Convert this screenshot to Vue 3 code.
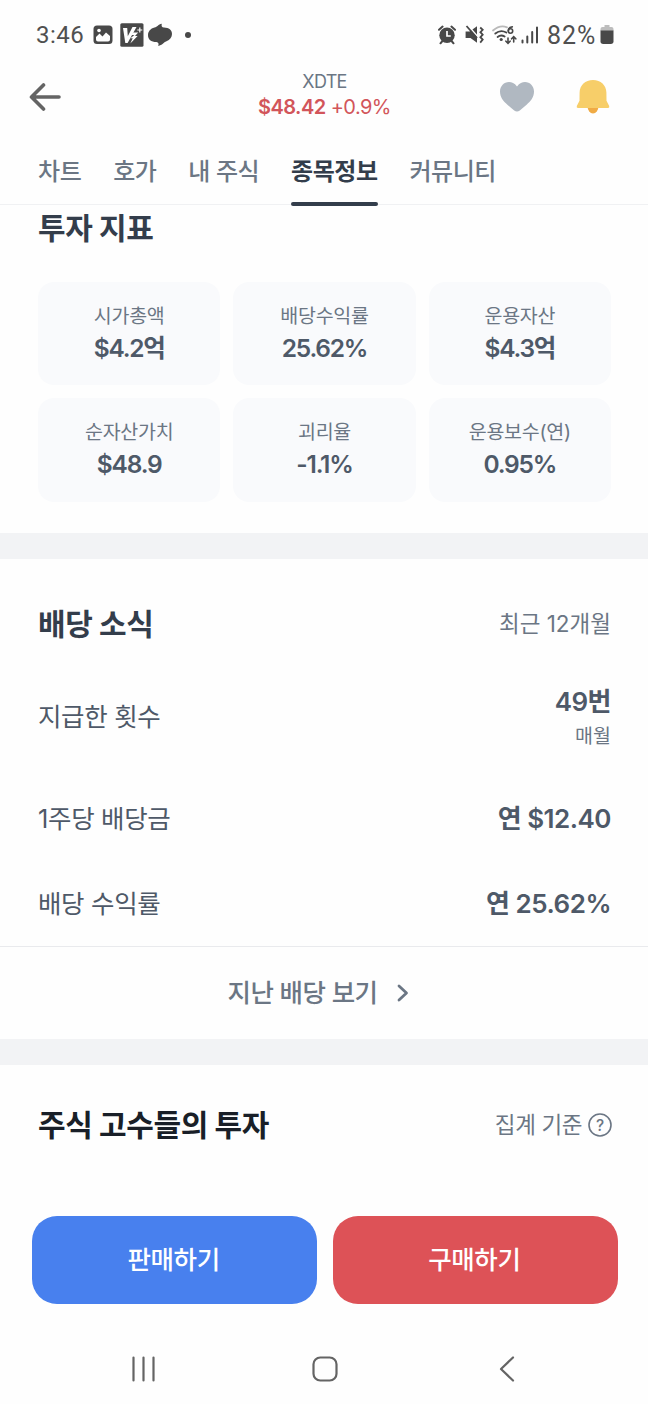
<template>
  <div class="screen">
    <div class="status">
      <div class="statusLeft">
        <span class="clock">3:46</span>
        <svg class="icoPhoto" width="20" height="20" viewBox="0 0 20 20">
          <rect x="0.5" y="0.5" width="19" height="18.5" rx="3.5" fill="#484848" />
          <path d="M3 14.500V12l3.500-3.500 3 3 3.500-4L17 11v3.500q0 2-2 2H5q-2 0-2-2z" fill="#fff" />
          <circle cx="6" cy="5.500" r="1.800" fill="#fff" />
        </svg>
        <svg class="icoVaccine" width="24" height="24" viewBox="0 0 24 24">
          <rect x="0.3" y="0.3" width="23.2" height="23.4" rx="1.5" fill="#484848" />
          <path d="M3 5h4.200l.6 8.200L12.500 4h4L7.600 20H5.300z" fill="#fff" />
          <path d="M12.700 9.500h5.500l-3.200 3.400h2.600L10.300 20.500l2.400-5.200h-2.300l4-3.200h-2.600z" fill="#fff" />
          <path d="M19.800 4.500v5M17.300 7h5" stroke="#fff" stroke-width="1.200" />
        </svg>
        <svg class="icoSwirl" width="24" height="24" viewBox="0 0 24 24">
          <path d="M13.800 .8C10 1.500 9.500 4 6.500 4.600C2.500 5.600 0 8.600 0 12.200C0 16.400 3 18.800 8.500 19.100C10.500 19.300 11 21 10.200 23C14.500 22.300 15.500 19.300 18.500 18.300C22 17 24 14.200 24 11C24 7 21 4.600 16 4.500C13.800 4.400 13.200 3 13.800 .8Z" fill="#484848" />
        </svg>
        <span class="dot"></span>
      </div>
      <div class="statusRight">
        <svg width="18" height="20" viewBox="0 0 18 20">
          <path d="M1 4.800 4.600 1.600M17 4.800 13.400 1.600M4 16.500 2.500 18.300M14 16.500l1.500 1.800" stroke="#484848" stroke-width="2" stroke-linecap="round" />
          <circle cx="9" cy="10.300" r="7.700" fill="#484848" />
          <path d="M9 6v5h3.800" stroke="#fff" stroke-width="1.700" fill="none" />
        </svg>
        <svg class="icoMute" width="20" height="20" viewBox="0 0 20 20">
          <path d="M.6 6.500h4L12 1.300v16.500L5.500 13H.6z" fill="#484848" />
          <path d="M2.800 .2 13.500 12.500" stroke="#fff" stroke-width="1.500" />
          <path d="M1.500 1 12 13" stroke="#484848" stroke-width="1.800" />
          <path d="M15.200 2.500l2.500 2.300-2.300 2.400 2.300 2.500-2.300 2.500 2.300 2.400-2.500 3" stroke="#484848" stroke-width="1.800" fill="none" />
        </svg>
        <svg class="icoWifi" width="25" height="20" viewBox="0 0 25 20">
          <g fill="none" stroke-linecap="round">
            <path d="M1 5.500Q8-.5 15 2.300" stroke="#b9b9b9" stroke-width="1.800" />
            <path d="M3.300 8.600Q8.500 4.300 14.300 7.500M5.600 11.900Q9 9.200 12.600 11.500" stroke="#484848" stroke-width="1.900" />
            <path d="M16 13v5M13.900 16.200l2.100 2.200 2.100-2.200M21.700 17v-5M19.600 13.800l2.100-2.200 2.100 2.200" stroke="#484848" stroke-width="1.600" />
            <path d="M20.300 1.800Q16.300 2.300 16.300 5.800" stroke="#484848" stroke-width="1.700" />
            <circle cx="18.500" cy="6" r="2.200" stroke="#484848" stroke-width="1.600" />
          </g>
          <circle cx="9.200" cy="14.500" r="1.600" fill="#484848" />
        </svg>
        <svg class="icoSignal" width="18" height="18" viewBox="0 0 18 18">
          <path d="M1.500 14.500v2M6.300 10.500v6M11.200 6v10.500M16 1.500v15" stroke="#484848" stroke-width="2" stroke-linecap="round" />
        </svg>
        <span class="percent">82%</span>
        <svg class="icoBattery" width="14" height="20" viewBox="0 0 14 20">
          <path d="M4.500 0h5v2h2Q13.500 2 13.500 4v2H.5V4q0-2 2-2h2z" fill="#bdbdbd" />
          <path d="M.5 5.500h13v10.800q0 2.700-2.700 2.700H3.200Q.5 19 .5 16.300z" fill="#484848" />
        </svg>
      </div>
    </div>

    <header class="head">
      <button class="iconBtn back" type="button" aria-label="뒤로">
        <svg width="32" height="30" viewBox="0 0 32 30">
          <path d="M14.500 3 2.500 15l12 12M3 15h27" fill="none" stroke="#646464" stroke-width="3.600" stroke-linecap="round" stroke-linejoin="round" />
        </svg>
      </button>
      <div class="quote">
        <div class="ticker">XDTE</div>
        <div class="price"><b>$48.42</b> +0.9%</div>
      </div>
      <div class="headActions">
        <button class="iconBtn" type="button" aria-label="관심">
          <svg width="36" height="32" viewBox="0 0 36 32">
            <path d="M18 5.500C20.500 2 23.300 1 26 1c5 0 9 4.200 9 9.500 0 5.700-3.300 9.600-7.400 13.200l-6.800 5.700q-2.800 2-5.600 0l-6.800-5.700C4.300 20.100 1 16.200 1 10.500 1 5.200 5 1 10 1c2.700 0 5.500 1 8 4.500z" fill="#b0b8c1" />
          </svg>
        </button>
        <button class="iconBtn" type="button" aria-label="알림">
          <svg width="34" height="36" viewBox="0 0 34 36">
            <path d="M11.500 27h11a5.500 7.500 0 0 1-11 0z" fill="#f0ab45" />
            <path d="M17 1C9.200 1 3.700 6.300 3.600 13.500l-.1 8.300-2.700 5.100Q.2 29 2 29h30q1.800 0 1.200-2.100l-2.700-5.100-.1-8.300C30.300 6.300 24.800 1 17 1z" fill="#f7ce69" />
          </svg>
        </button>
      </div>
    </header>

    <nav class="tabs">
      <button
        v-for="tab in tabs"
        :key="tab"
        class="tab"
        :class="{ active: tab === activeTab }"
        type="button"
        @click="activeTab = tab"
      >{{ tab }}</button>
    </nav>

    <section class="metrics">
      <h2 class="title">투자 지표</h2>
      <div class="grid">
        <div v-for="m in metrics" :key="m.label" class="card">
          <div class="cardLabel">{{ m.label }}</div>
          <div class="cardValue">{{ m.value }}</div>
        </div>
      </div>
    </section>

    <div class="band"></div>

    <section class="dividend">
      <div class="sectionHead">
        <h2 class="title">배당 소식</h2>
        <span class="hint">최근 12개월</span>
      </div>
      <div v-for="r in rows" :key="r.label" class="row" :class="{ tall: r.sub }">
        <span class="rowLabel">{{ r.label }}</span>
        <div class="rowRight">
          <div class="rowValue">{{ r.value }}</div>
          <div v-if="r.sub" class="rowSub">{{ r.sub }}</div>
        </div>
      </div>
    </section>

    <button class="more" type="button">
      <span>지난 배당 보기</span>
      <svg width="12" height="18" viewBox="0 0 12 18">
        <path d="M2 2l7.500 7L2 16" fill="none" stroke="#6b7684" stroke-width="2.800" stroke-linecap="round" stroke-linejoin="round" />
      </svg>
    </button>

    <div class="band"></div>

    <section class="masters">
      <h2 class="title dark">주식 고수들의 투자</h2>
      <div class="basis">
        <span>집계 기준</span>
        <svg width="24" height="24" viewBox="0 0 24 24">
          <circle cx="12" cy="12" r="11" fill="none" stroke="#6b7684" stroke-width="1.600" />
          <text class="question" x="12" y="17.500" text-anchor="middle">?</text>
        </svg>
      </div>
    </section>

    <div class="trade">
      <button class="tradeBtn sell" type="button">판매하기</button>
      <button class="tradeBtn buy" type="button">구매하기</button>
    </div>

    <div class="sysnav">
      <svg width="26" height="26" viewBox="0 0 26 26">
        <path d="M2.500 1.500v23M12.500 1.500v23M22.500 1.500v23" stroke="#646464" stroke-width="2.200" stroke-linecap="round" />
      </svg>
      <svg width="26" height="26" viewBox="0 0 26 26">
        <rect x="1.5" y="1.5" width="23" height="23" rx="6.8" fill="none" stroke="#646464" stroke-width="2.2" />
      </svg>
      <svg width="26" height="26" viewBox="0 0 26 26">
        <path d="M20 1.500 8 13l12 11.500" fill="none" stroke="#646464" stroke-width="2.200" stroke-linecap="round" stroke-linejoin="round" />
      </svg>
    </div>
  </div>
</template>

<script setup>
import { ref } from "vue";

const tabs = ["차트", "호가", "내 주식", "종목정보", "커뮤니티"];
const activeTab = ref("종목정보");

const metrics = [
  { label: "시가총액", value: "$4.2억" },
  { label: "배당수익률", value: "25.62%" },
  { label: "운용자산", value: "$4.3억" },
  { label: "순자산가치", value: "$48.9" },
  { label: "괴리율", value: "-1.1%" },
  { label: "운용보수(연)", value: "0.95%" },
];

const rows = [
  { label: "지급한 횟수", value: "49번", sub: "매월" },
  { label: "1주당 배당금", value: "연 $12.40" },
  { label: "배당 수익률", value: "연 25.62%" },
];
</script>

<style>
body { margin: 0; background: #fefefe; }
</style>

<style scoped>
.screen {
  width: 648px;
  height: 1404px;
  display: flex;
  flex-direction: column;
  overflow: hidden;
  background: #fefefe;
  color: #4e5968;
  font-family: Inter, "Noto Sans CJK KR", sans-serif;
}

.screen > * { flex-shrink: 0; box-sizing: border-box; }

button {
  border: 0;
  padding: 0;
  background: none;
  font-family: inherit;
  color: inherit;
  cursor: pointer;
}

svg { display: block; flex-shrink: 0; }

.status {
  height: 66px;
  padding: 4px 34px 0 36px;
  display: flex;
  align-items: center;
  justify-content: space-between;
  color: #505050;
  font-family: Roboto, sans-serif;
  font-size: 24px;
}

.statusLeft, .statusRight { display: flex; align-items: center; }
.clock { width: 57px; letter-spacing: .5px; }
.icoVaccine { margin-left: 6.5px; }
.icoSwirl { margin-left: 4.5px; }
.dot { width: 6px; height: 6px; margin-left: 12.5px; border-radius: 50%; background: #484848; }
.icoMute { margin-left: 9px; }
.icoWifi { margin-left: 7px; }
.icoSignal { margin-left: 4px; }
.percent { width: 53px; margin-left: 8px; font-size: 25px; letter-spacing: .9px; }

.head {
  height: 70px;
  padding: 0 38px 8px 29px;
  display: grid;
  grid-template-columns: 1fr auto 1fr;
  align-items: center;
}

.back { justify-self: start; }
.quote { padding: 0 0 3px 10px; text-align: center; color: #6b7684; }
.ticker { font-size: 18px; line-height: 24px; letter-spacing: -.7px; }
.price { font-size: 20px; line-height: 27px; letter-spacing: -.55px; color: #d2555a; }
.price b { font-weight: 600; }
.headActions { display: flex; align-items: center; justify-content: flex-end; gap: 41px; }

.tabs {
  height: 69px;
  padding: 0 38px;
  display: flex;
  gap: 31.9px;
  border-bottom: 1px solid #f0f1f3;
}

.tab {
  position: relative;
  height: 70px;
  padding-top: 1px;
  font-size: 24px;
  line-height: 36px;
  font-weight: 500;
  letter-spacing: -.45px;
  color: #6b7684;
}

.tab.active { font-weight: 700; color: #333d4b; }

.tab.active::after {
  content: "";
  position: absolute;
  left: 0;
  right: 0;
  bottom: 0;
  height: 4px;
  border-radius: 2px;
  background: #333d4b;
}

.title {
  margin: 0;
  font-size: 30px;
  line-height: 40px;
  font-weight: 700;
  letter-spacing: -.4px;
  color: #333d4b;
}

.title.dark { color: #191f28; }

.metrics { height: 328px; padding: 3px 37px 0 38px; }

.grid {
  margin-top: 33.5px;
  display: grid;
  grid-template-columns: repeat(3, 1fr);
  gap: 13px;
}

.card {
  height: 103.5px;
  padding-top: 19px;
  box-sizing: border-box;
  border-radius: 16px;
  background: #f9fafc;
  text-align: center;
}

.cardLabel { font-size: 19.5px; line-height: 30px; color: #6b7684; letter-spacing: -.25px; }
.cardValue { font-size: 24.5px; line-height: 34px; font-weight: 600; letter-spacing: -1.2px; }

.band { height: 26px; background: #f2f3f5; }

.dividend { height: 387px; padding: 45px 37px 0 38px; }

.sectionHead {
  display: flex;
  align-items: center;
  justify-content: space-between;
  margin-bottom: 34px;
}

.hint { font-size: 22.5px; line-height: 40px; color: #6b7684; }

.row {
  height: 43px;
  margin-bottom: 42px;
  display: flex;
  align-items: center;
  justify-content: space-between;
}

.row.tall { height: 78px; margin-bottom: 41px; }
.rowLabel { font-size: 25.5px; line-height: 38px; letter-spacing: -.35px; }
.rowRight { text-align: right; }
.rowValue { font-size: 26px; line-height: 38px; font-weight: 600; letter-spacing: -.5px; }
.rowSub { font-size: 19.5px; line-height: 30px; color: #6b7684; }

.more {
  height: 93px;
  border-top: 1px solid #e9eaed;
  display: flex;
  align-items: center;
  justify-content: center;
  gap: 20px;
  padding-right: 11px;
  font-size: 25.5px;
  line-height: 38px;
  font-weight: 500;
  letter-spacing: -.55px;
  color: #6b7684;
}

.masters {
  height: 151px;
  padding: 40px 36px 0 38px;
  display: flex;
  align-items: flex-start;
  justify-content: space-between;
}

.basis {
  height: 40px;
  display: flex;
  align-items: center;
  gap: 6px;
  font-size: 22.5px;
  line-height: 40px;
  letter-spacing: -.4px;
  color: #6b7684;
}

.question { font-size: 15.5px; font-weight: 500; letter-spacing: 0; fill: #6b7684; }

.trade {
  padding: 0 30px 0 32px;
  display: grid;
  grid-template-columns: 1fr 1fr;
  gap: 15.5px;
}

.tradeBtn {
  height: 88px;
  padding: 0 2px 1px 0;
  border-radius: 25px;
  color: #fff;
  font-size: 25.5px;
  line-height: 38px;
  font-weight: 500;
  letter-spacing: -.4px;
}

.sell { background: #4880ee; }
.buy { background: #dd5257; }

.sysnav {
  flex: 1;
  padding: 52px 129px 0 131px;
  display: flex;
  align-items: flex-start;
  justify-content: space-between;
}
</style>
